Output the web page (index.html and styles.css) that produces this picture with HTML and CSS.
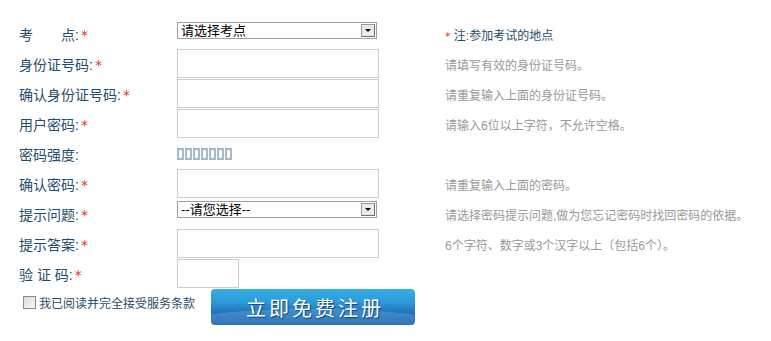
FILE: index.html
```html
<html lang="zh-CN">
<head>
     <meta charset="UTF-8">
     <title>注册</title>
     <link rel="stylesheet" href="styles.css">
</head>
<body>
     <form class="reg">
          <div class="row">
               <label class="lbl">考　　点:<em>*</em></label>
               <div class="field">
                    <div class="sel">
                         <select><option>请选择考点</option></select>
                         <span class="arrow"></span>
                    </div>
               </div>
               <div class="tip note"><em>*</em> 注:参加考试的地点</div>
          </div>
          <div class="row">
               <label class="lbl">身份证号码:<em>*</em></label>
               <div class="field"><input class="text" type="text"></div>
               <div class="tip">请填写有效的身份证号码。</div>
          </div>
          <div class="row">
               <label class="lbl">确认身份证号码:<em>*</em></label>
               <div class="field"><input class="text" type="text"></div>
               <div class="tip">请重复输入上面的身份证号码。</div>
          </div>
          <div class="row">
               <label class="lbl">用户密码:<em>*</em></label>
               <div class="field"><input class="text" type="password"></div>
               <div class="tip">请输入6位以上字符，不允许空格。</div>
          </div>
          <div class="row">
               <label class="lbl">密码强度:</label>
               <div class="strength">
                    <span></span><span></span><span></span><span></span><span></span><span></span><span></span>
               </div>
               <div class="tip"></div>
          </div>
          <div class="row">
               <label class="lbl">确认密码:<em>*</em></label>
               <div class="field"><input class="text" type="password"></div>
               <div class="tip">请重复输入上面的密码。</div>
          </div>
          <div class="row">
               <label class="lbl">提示问题:<em>*</em></label>
               <div class="field">
                    <div class="sel sel2">
                         <select><option>--请您选择--</option></select>
                         <span class="arrow"></span>
                    </div>
               </div>
               <div class="tip">请选择密码提示问题,做为您忘记密码时找回密码的依据。</div>
          </div>
          <div class="row">
               <label class="lbl">提示答案:<em>*</em></label>
               <div class="field"><input class="text" type="text"></div>
               <div class="tip">6个字符、数字或3个汉字以上（包括6个）。</div>
          </div>
          <div class="row">
               <label class="lbl">验 证 码:<em>*</em></label>
               <div class="field"><input class="text code" type="text"></div>
               <div class="tip"></div>
          </div>
          <div class="agree">
               <label class="check"><input type="checkbox"><span>我已阅读并完全接受服务条款</span></label>
               <button type="button" class="submit">立即免费注册</button>
          </div>
     </form>
</body>
</html>
```

FILE: styles.css
```css
body{
     margin: 0;
     background: #fff;
     font-family: "Liberation Sans", "Noto Sans CJK SC", sans-serif;
}
.reg{
     padding: 19px 0 0 19px;
}
.row{
     display: grid;
     grid-template-columns: 158px 268px auto;
     height: 30px;
     align-items: center;
}
.lbl{
     font-size: 14px;
     color: #1f4d6c;
     white-space: nowrap;
}
em{
     font-style: normal;
     font-family: "DejaVu Sans", sans-serif;
     color: #e8302f;
     margin-left: 2px;
}
.field{
     align-self: start;
}
.text{
     display: block;
     width: 202px;
     height: 29px;
     margin: 0;
     padding: 0 4px;
     box-sizing: border-box;
     border: 1px solid #cdcdcd;
     outline: none;
}
.text.code{
     width: 62px;
}
.sel{
     position: relative;
     width: 200px;
     height: 17px;
     margin-top: 3px;
     box-sizing: border-box;
     border: 1px solid #9f9f9f;
     background: #fff;
}
.sel2{
     margin-top: 2px;
}
.sel select{
     -webkit-appearance: none;
     appearance: none;
     border: 0;
     outline: none;
     background: transparent;
     width: 100%;
     height: 15px;
     padding: 0 0 0 3px;
     margin: 0;
     font-family: "Liberation Sans", "Noto Sans CJK SC", sans-serif;
     font-size: 13px;
     line-height: 15px;
     color: #000;
}
.arrow{
     position: absolute;
     right: 1px;
     top: 1px;
     width: 14px;
     height: 13px;
     box-sizing: border-box;
     background: #ebebeb;
     border: 1px solid #9a9a9a;
     border-right-color: #6d6d6d;
     border-bottom-color: #6d6d6d;
}
.arrow::after{
     content: "";
     position: absolute;
     left: 3px;
     top: 4px;
     border-left: 3px solid transparent;
     border-right: 3px solid transparent;
     border-top: 3px solid #000;
}
.tip{
     font-size: 12px;
     color: #999;
     white-space: nowrap;
}
.tip.note{
     color: #1f4d6c;
}
.tip.note em{
     margin-left: 0;
     font-size: 11px;
}
.strength{
     display: flex;
     gap: 1px;
}
.strength span{
     width: 7px;
     height: 12px;
     box-sizing: border-box;
     border: 2px solid #a4b7c6;
}
.agree{
     display: flex;
     align-items: flex-start;
     height: 40px;
}
.check{
     width: 192px;
     display: flex;
     align-items: center;
     margin-top: 5px;
     font-size: 12px;
     color: #1f4d6c;
     white-space: nowrap;
}
.check input{
     -webkit-appearance: none;
     appearance: none;
     width: 13px;
     height: 13px;
     margin: 0 3px 0 4px;
     box-sizing: border-box;
     border: 1px solid #8a8a8a;
     background: linear-gradient(135deg, #dcdcdc, #f8f8f8);
}
.submit{
     width: 204px;
     height: 36px;
     margin: 0;
     padding: 0 0 0 4px;
     border: 0;
     border-radius: 4px;
     cursor: pointer;
     background:
          radial-gradient(ellipse 260px 40px at 100px 44px, rgba(255,255,255,0.14) 60%, rgba(255,255,255,0) 61%),
          linear-gradient(#36aee4 0%, #2c9cda 35%, #2379c3 60%, #0f5fab 100%);
     color: #fff;
     font-family: "Noto Sans CJK SC", sans-serif;
     font-size: 20px;
     letter-spacing: 3px;
     text-shadow: 1px 1px 1px #0b4474;
}
```
